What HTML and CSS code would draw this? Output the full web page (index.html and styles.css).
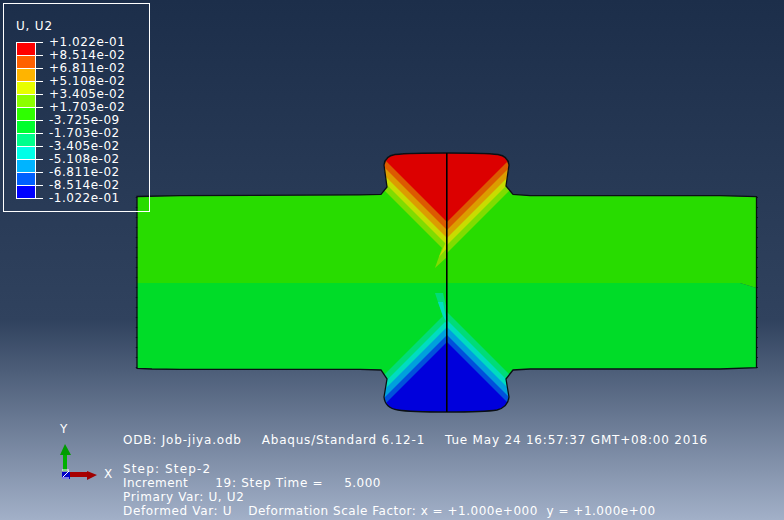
FILE: index.html
```html
<!DOCTYPE html>
<html lang="en">
<head>
<meta charset="utf-8">
<title>Abaqus viewport</title>
<link rel="stylesheet" href="styles.css">
</head>
<body>
<main class="viewport">
  <svg class="model" width="784" height="520" viewBox="0 0 784 520">
    <defs>
      <clipPath id="top-half"><path d="M137 196.500 L180 195.700 L360 194.900 L381 194.400 L387 187 L384 165 Q385 156 395 154.500 Q410 153 447 153 Q485 153 498 154.500 Q508 156 509 165 L506 186 L513 194.300 L530 195.700 L720 195.700 L756.500 196.700 L756.500 288 L740 283 L137 283 Z"/></clipPath>
      <clipPath id="bottom-half"><path d="M137 283 L740 283 L756.500 288 L756.500 367.700 L720 369 L530 369 L513 370 L506 379 L509 397 Q508 407 497 410 Q485 412 447 412 Q410 412 398 410 Q385 408 384 397 L387 379 L381 370 L360 369.300 L180 369.300 L152 369 L137 368.300 Z"/></clipPath>
    </defs>
    <g clip-path="url(#top-half)">
      <rect class="c-g1" x="130" y="190" width="630" height="100"/>
      <polygon class="c-y1" points="370,176 447,253 524,176 524,140 370,140"/>
      <polygon class="c-y2" points="370,168 447,245 524,168 524,140 370,140"/>
      <polygon class="c-o2" points="370,161 447,238 524,161 524,140 370,140"/>
      <polygon class="c-o1" points="370,153 447,230 524,153 524,140 370,140"/>
      <polygon class="c-r" points="370,145 447,222 524,145 524,140 370,140"/>
      <polygon class="c-y1" points="443,245 447,250 447,257 435,268"/>
      <polygon class="c-y2" points="447,240 439,257 447,248"/>
    </g>
    <g clip-path="url(#bottom-half)">
      <rect class="c-g2" x="130" y="280" width="630" height="95"/>
      <polygon class="c-t1" points="370,389 447,312 524,389 524,420 370,420"/>
      <polygon class="c-t2" points="370,397 447,320 524,397 524,420 370,420"/>
      <polygon class="c-c1" points="370,404 447,327 524,404 524,420 370,420"/>
      <polygon class="c-b1" points="370,412 447,335 524,412 524,420 370,420"/>
      <polygon class="c-b0" points="370,419 447,342 524,419 524,420 370,420"/>
      <polygon class="c-t1" points="435,293 443,293 447,310 447,325 443,317"/>
      <polygon class="c-t2" points="438,302 443,302 447,323 443,316"/>
    </g>
    <path class="edge" d="M137 196.500 L180 195.700 L360 194.900 L381 194.400 L387 187 L384 165 Q385 156 395 154.500 Q410 153 447 153 Q485 153 498 154.500 Q508 156 509 165 L506 186 L513 194.300 L530 195.700 L720 195.700 L756.500 196.700 L756.500 367.700 L720 369 L530 369 L513 370 L506 379 L509 397 Q508 407 497 410 Q485 412 447 412 Q410 412 398 410 Q385 408 384 397 L387 379 L381 370 L360 369.300 L180 369.300 L152 369 L137 368.300 Z"/>
    <line class="ticks" x1="136.500" y1="197" x2="136.500" y2="368"/>
    <line class="ticks" x1="757" y1="197" x2="757" y2="368"/>
    <line class="seam" x1="446.800" y1="153" x2="446.800" y2="412"/>
    <g class="triad">
      <rect class="shaft-y" x="63" y="454" width="4" height="17"/>
      <polygon class="head-y" points="65,444 71,455 60,455"/>
      <rect class="shaft-x" x="70" y="472" width="17" height="5"/>
      <polygon class="head-x" points="97,475 87,471 87,480"/>
      <rect class="node-z" x="62" y="472" width="8" height="7"/>
      <line class="z-mark" x1="63" y1="477" x2="69" y2="471"/>
      <line class="z-mark" x1="62" y1="470" x2="69" y2="470"/>
      <line class="z-mark" x1="62" y1="478" x2="69" y2="478"/>
    </g>
  </svg>

  <section class="legend">
    <div class="legend-title">U, U2</div>
    <div class="legend-body">
      <div class="bar">
        <span class="swatch s1"></span><span class="swatch s2"></span><span class="swatch s3"></span><span class="swatch s4"></span><span class="swatch s5"></span><span class="swatch s6"></span><span class="swatch s7"></span><span class="swatch s8"></span><span class="swatch s9"></span><span class="swatch s10"></span><span class="swatch s11"></span><span class="swatch s12"></span>
      </div>
      <ul class="scale">
        <li>+1.022e-01</li><li>+8.514e-02</li><li>+6.811e-02</li><li>+5.108e-02</li><li>+3.405e-02</li><li>+1.703e-02</li><li>-3.725e-09</li><li>-1.703e-02</li><li>-3.405e-02</li><li>-5.108e-02</li><li>-6.811e-02</li><li>-8.514e-02</li><li>-1.022e-01</li>
      </ul>
    </div>
  </section>

  <span class="axis axis-y">Y</span>
  <span class="axis axis-x">X</span>

  <footer class="info">
    <div class="line line-odb"><span>ODB: Job-jiya.odb</span><span>Abaqus/Standard 6.12-1</span><span>Tue May 24 16:57:37 GMT+08:00 2016</span></div>
    <div class="line line-step">Step: Step-2</div>
    <div class="line line-inc"><span class="f-name">Increment</span><span class="f-step">19: Step Time =</span><span class="f-time">5.000</span></div>
    <div class="line line-var">Primary Var: U, U2</div>
    <div class="line line-def"><span class="f-var">Deformed Var: U</span><span class="f-scale">Deformation Scale Factor: x = +1.000e+000&nbsp;&nbsp;y = +1.000e+00</span></div>
  </footer>
</main>
</body>
</html>
```

FILE: styles.css
```css
* { box-sizing: border-box; }
html, body { margin: 0; padding: 0; }
body { width: 784px; height: 520px; overflow: hidden; }

.viewport {
  position: relative;
  width: 784px;
  height: 520px;
  overflow: hidden;
  color: #fff;
  font-family: "DejaVu Sans", sans-serif;
  font-size: 12px;
  background: linear-gradient(180deg, #1c2e4a 0%, #30425e 61.500%, #a2b0c8 100%);
}
.model { position: absolute; left: 0; top: 0; display: block; }

.c-r { fill: #dc0000; }
.c-o1 { fill: #dc5a00; }
.c-o2 { fill: #dc9c00; }
.c-y2 { fill: #c8dc00; }
.c-y1 { fill: #80dc00; }
.c-g1 { fill: #28dc00; }
.c-g2 { fill: #00dc28; }
.c-t1 { fill: #00dc78; }
.c-t2 { fill: #00dcc0; }
.c-c1 { fill: #00a0dc; }
.c-b1 { fill: #0050dc; }
.c-b0 { fill: #0000dc; }

.edge { fill: none; stroke: #0a0f14; stroke-width: 1.300; }
.ticks { stroke: #0a0f14; stroke-width: 1.500; stroke-dasharray: 1 9; }
.seam { stroke: #000; stroke-width: 1.600; }

.shaft-y { fill: #00b000; }
.head-y { fill: #009c00; }
.shaft-x { fill: #a80000; }
.head-x { fill: #a00000; }
.node-z { fill: #0000c8; }
.z-mark { stroke: #fff; stroke-width: 1; }

.legend {
  position: absolute;
  left: 3px;
  top: 3px;
  width: 147px;
  height: 209px;
  border: 1px solid #fff;
  padding: 14px 0 0 12px;
}
.legend-title { line-height: 16px; height: 24px; letter-spacing: 0.800px; }
.legend-body { display: flex; }
.bar {
  width: 20px;
  height: 157px;
  display: flex;
  flex-direction: column;
  border: 1px solid #fff;
  border-bottom-width: 0;
}
.swatch { display: block; height: 13px; border-bottom: 1px solid #fff; }
.s1 { background: #ff0000; }
.s2 { background: #ff6000; }
.s3 { background: #ffb400; }
.s4 { background: #e8ff00; }
.s5 { background: #8cff00; }
.s6 { background: #2eff00; }
.s7 { background: #00ff2e; }
.s8 { background: #00ff8c; }
.s9 { background: #00ffe8; }
.s10 { background: #00b4ff; }
.s11 { background: #0060ff; }
.s12 { background: #0000ff; }

.scale { list-style: none; margin: -6px 0 0; padding: 0; }
.scale li {
  position: relative;
  height: 13px;
  line-height: 13px;
  padding-left: 13px;
  letter-spacing: 0.500px;
  white-space: nowrap;
}
.scale li::before {
  content: "";
  position: absolute;
  left: 0;
  top: 6px;
  width: 7px;
  height: 1px;
  background: #fff;
}

.axis { position: absolute; line-height: 14px; }
.axis-y { left: 60px; top: 422px; }
.axis-x { left: 104px; top: 467px; }

.info {
  position: absolute;
  left: 123px;
  top: 433px;
  width: 640px;
  white-space: nowrap;
}
.line { display: flex; height: 14.300px; line-height: 14.300px; }
.line-odb { gap: 20px; margin-bottom: 14.300px; letter-spacing: 0.800px; }
.line-step { letter-spacing: 1.150px; }
.line-inc { letter-spacing: 0.450px; }
.line-inc .f-step { margin-left: 27px; letter-spacing: 0.700px; }
.line-inc .f-time { margin-left: 21px; }
.line-var { letter-spacing: 0.620px; }
.line-def .f-var { letter-spacing: 0.650px; }
.line-def .f-scale { margin-left: 16px; letter-spacing: 0.510px; }
```
